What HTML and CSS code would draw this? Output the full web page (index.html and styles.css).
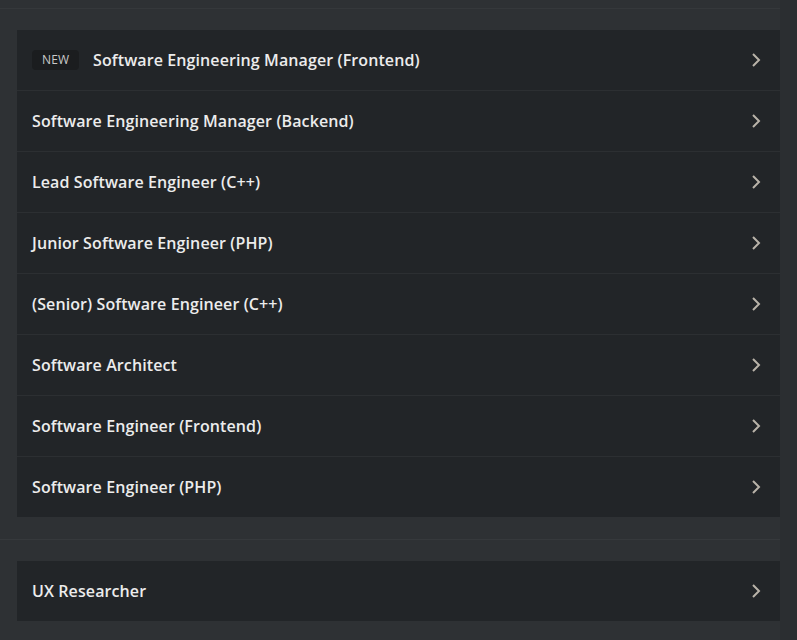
FILE: index.html
```html
<!DOCTYPE html>
<html lang="en">
<head>
	<meta charset="UTF-8">
	<meta name="viewport" content="width=device-width, initial-scale=1.0">
	<title>Jobs</title>
	<link rel="stylesheet" href="styles.css">
</head>
<body>
	<div class="page">
		<div class="top"></div>
		<section class="group">
			<ul class="jobs">
				<li><span class="new">NEW</span><span class="title">Software Engineering Manager (Frontend)</span><svg class="arrow" viewBox="0 0 10 16"><path d="M2 2l6 6-6 6"/></svg></li>
				<li><span class="title">Software Engineering Manager (Backend)</span><svg class="arrow" viewBox="0 0 10 16"><path d="M2 2l6 6-6 6"/></svg></li>
				<li><span class="title">Lead Software Engineer (C++)</span><svg class="arrow" viewBox="0 0 10 16"><path d="M2 2l6 6-6 6"/></svg></li>
				<li><span class="title">Junior Software Engineer (PHP)</span><svg class="arrow" viewBox="0 0 10 16"><path d="M2 2l6 6-6 6"/></svg></li>
				<li><span class="title">(Senior) Software Engineer (C++)</span><svg class="arrow" viewBox="0 0 10 16"><path d="M2 2l6 6-6 6"/></svg></li>
				<li><span class="title">Software Architect</span><svg class="arrow" viewBox="0 0 10 16"><path d="M2 2l6 6-6 6"/></svg></li>
				<li><span class="title">Software Engineer (Frontend)</span><svg class="arrow" viewBox="0 0 10 16"><path d="M2 2l6 6-6 6"/></svg></li>
				<li><span class="title">Software Engineer (PHP)</span><svg class="arrow" viewBox="0 0 10 16"><path d="M2 2l6 6-6 6"/></svg></li>
			</ul>
		</section>
		<section class="group">
			<ul class="jobs">
				<li><span class="title">UX Researcher</span><svg class="arrow" viewBox="0 0 10 16"><path d="M2 2l6 6-6 6"/></svg></li>
			</ul>
		</section>
	</div>
</body>
</html>
```

FILE: styles.css
```css
html, body {
	margin: 0;
	padding: 0;
	background-color: #2b2e31;
	overflow: hidden;
}

div.page {
	width: 780px;
	background-color: #2e3134;
	font-family: "Open Sans", "Noto Sans", sans-serif;
}

div.page div.top {
	height: 8px;
	border-bottom: 1px solid #35383b;
}

section.group {
	padding: 21px 0 22px 17px;
	border-bottom: 1px solid #36393c;
}

section.group:last-child {
	border-bottom: none;
}

ul.jobs {
	list-style: none;
	margin: 0;
	padding: 0;
	background-color: #222528;
}

ul.jobs li {
	display: flex;
	align-items: center;
	height: 60px;
	padding: 0 19px 0 15px;
	border-top: 1px solid #2c2f32;
	color: #ececec;
	font-size: 16px;
	font-weight: 600;
	letter-spacing: 0.1px;
}

ul.jobs li:first-child {
	border-top: none;
}

ul.jobs li span.new {
	background-color: #1b1d1f;
	color: #c9c9c9;
	font-size: 12px;
	font-weight: 400;
	line-height: 20px;
	padding: 0 10px;
	border-radius: 4px;
	margin-right: 14px;
}

ul.jobs li span.title {
	flex: 1;
}

ul.jobs li svg.arrow {
	width: 10px;
	height: 16px;
	fill: none;
	stroke: #b9b3a9;
	stroke-width: 2;
}
```
